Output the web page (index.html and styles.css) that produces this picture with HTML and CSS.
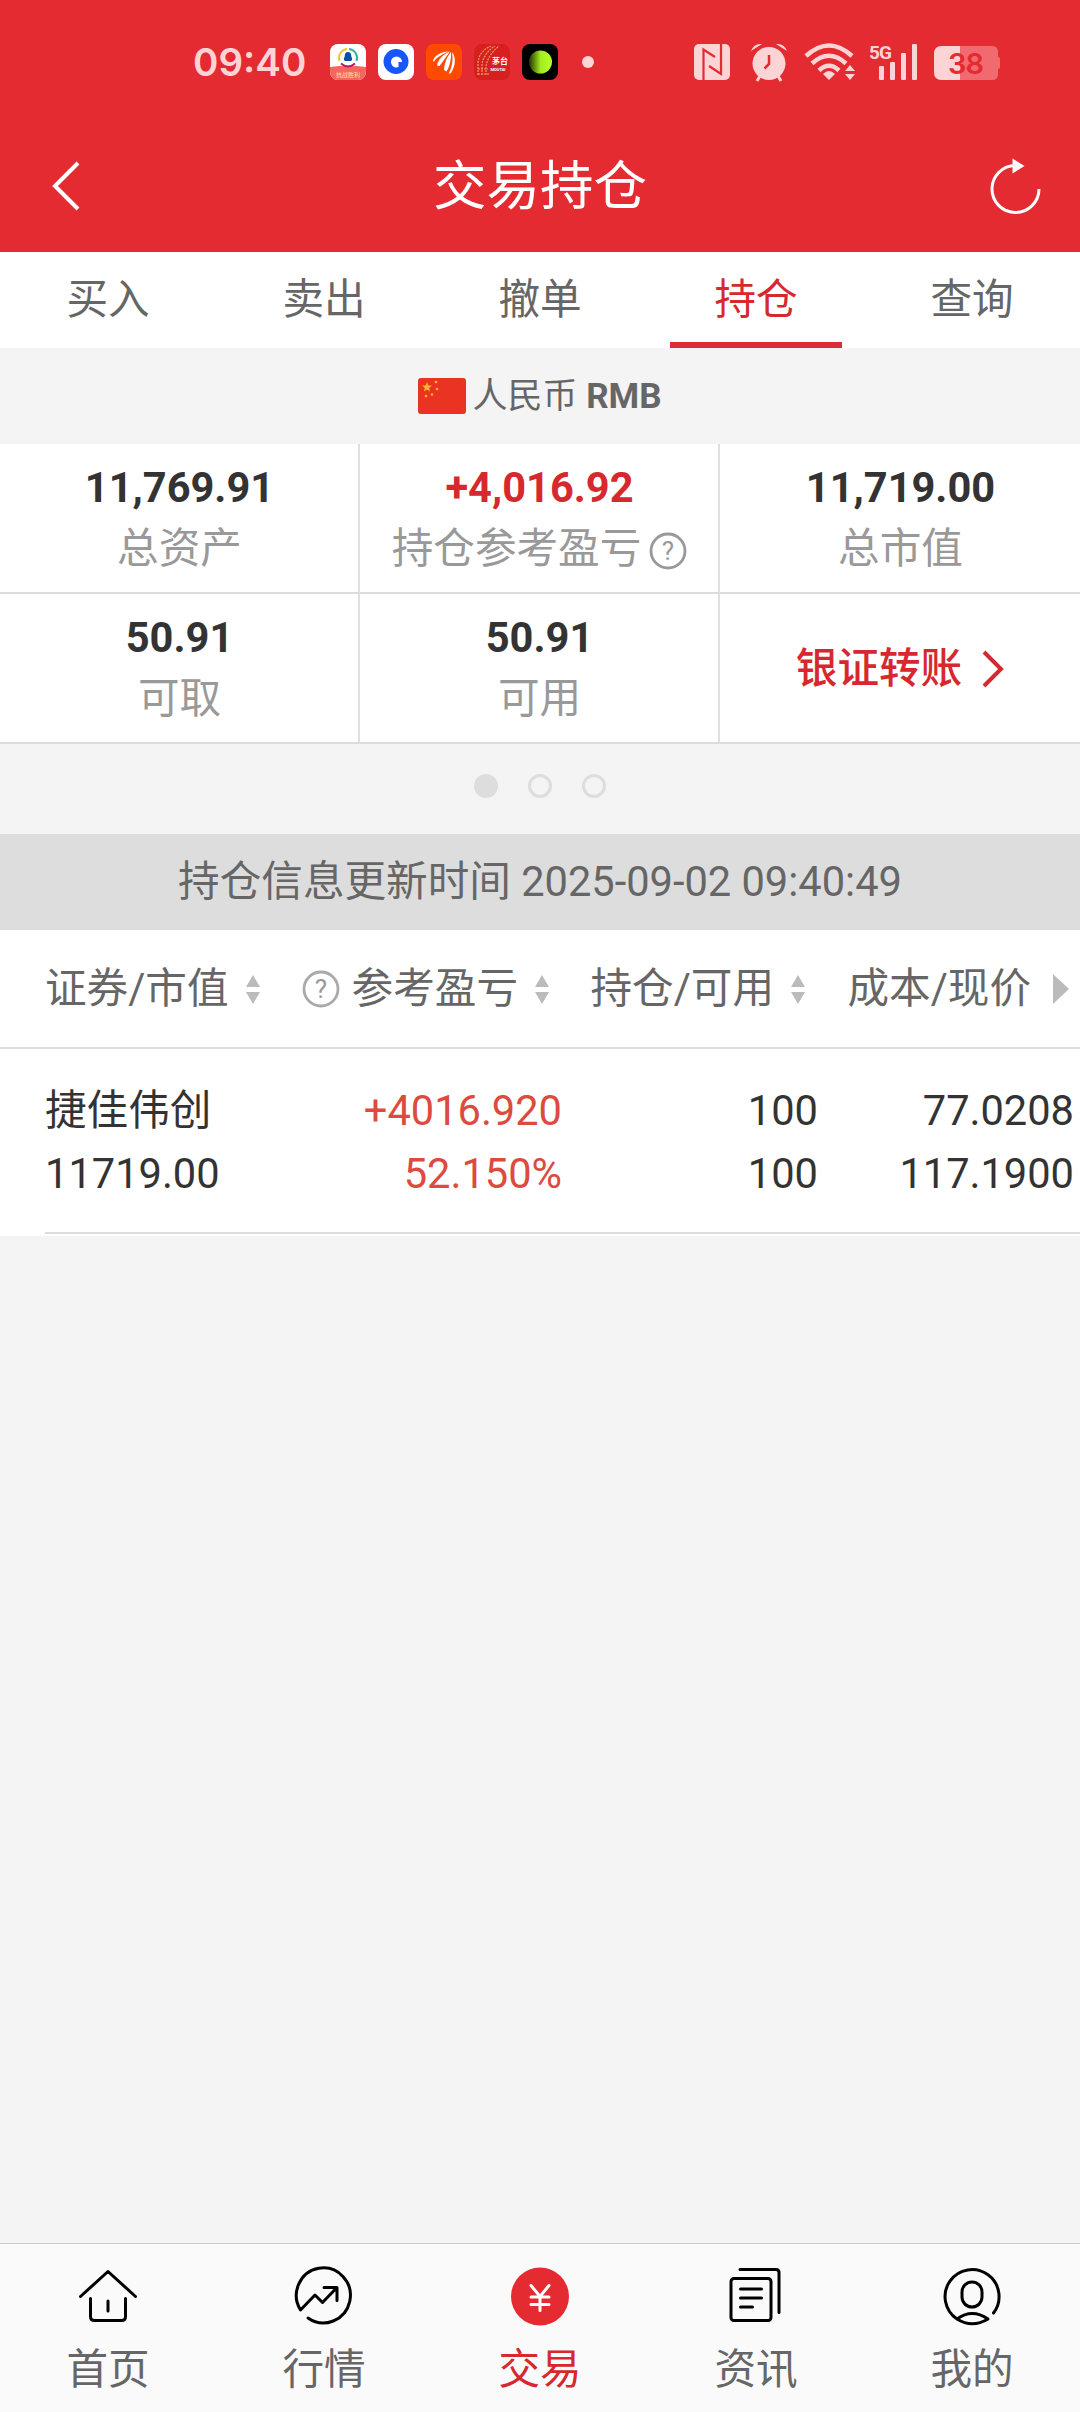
FILE: index.html
```html
<!DOCTYPE html>
<html lang="zh-CN">
<head>
<meta charset="utf-8">
<title>交易持仓</title>
<link rel="stylesheet" href="styles.css">
</head>
<body>
<div class="app">
  <header class="header">
    <div class="status">
      <span class="clock">09:40</span>
      <div class="notices">
        <svg width="36" height="36" viewBox="0 0 36 36"><rect width="36" height="36" rx="8" fill="#fff"/><path d="M0 23q18-3 36 0v5a8 8 0 0 1-8 8H8a8 8 0 0 1-8-8z" fill="#f4675f"/><g fill="none" stroke-width="2"><path d="M9.500 17A9 9 0 0 1 17 5" stroke="#efc33c"/><path d="M19 5a9 9 0 0 1 7.500 12" stroke="#32b39c"/><path d="M11 19.500q7 6 14 0" stroke="#b51e6c"/></g><path d="M18 8c2.500 0 3.300 2 3.300 4.500 1 2 1.200 4-.3 4.500h-6c-1.500-.5-1.300-2.500-.3-4.500 0-2.500.8-4.500 3.300-4.500z" fill="#0b4f9e"/><text x="18" y="33" class="tiny">抗战胜利</text></svg>
        <svg width="36" height="36" viewBox="0 0 36 36"><rect width="36" height="36" rx="8" fill="#fff"/><circle cx="18" cy="17.500" r="12.500" fill="#1557fb"/><path d="M18.500 23.500a5.500 5.500 0 1 1 5.500-5.500h-3.500v5z" fill="#fff"/></svg>
        <svg width="36" height="36" viewBox="0 0 36 36"><rect width="36" height="36" rx="8" fill="#ff4a00"/><path d="M7 17.500C7 12 15 8 23 7.300 17 10 11 13 8 17.500zM11 21.500C12 15 18 10 24 7.500 20.500 12 17.500 17 13.500 22zM18 26C18.500 18 22 11.500 25 8 25.500 14 24 22 20.500 27.500zM22.500 30C27 22 27 14 26 8 30 13 30 21 25 29z" fill="#fff"/></svg>
        <svg width="36" height="36" viewBox="0 0 36 36"><rect width="36" height="36" rx="8" fill="#d6201f"/><g fill="none" stroke="#e8a05c" stroke-width="1.200" stroke-dasharray="2 1"><path d="M4 31V19Q5 7 17 2M8 31V20Q10 9 21 2M12 31V22Q14 11 25 2M4 25h10M4 30h12"/></g><text x="26" y="20" class="tiny tiny-bold">茅台</text><text x="24" y="27" class="tiny tiny-latin">MOUTAI</text></svg>
        <svg width="36" height="36" viewBox="0 0 36 36"><defs><linearGradient id="glow"><stop offset="0" stop-color="#233300"/><stop offset=".5" stop-color="#a2eb20"/><stop offset="1" stop-color="#b8ff2a"/></linearGradient></defs><rect width="36" height="36" rx="8"/><circle cx="18.500" cy="18" r="11.500" fill="url(#glow)"/></svg>
      </div>
      <i class="more"></i>
      <svg class="system" width="310" height="40" viewBox="0 0 310 40" fill="#fdd4d6">
        <rect x="0" y="2" width="36" height="36" rx="5"/><path d="M9.500 38V7.500L21 15M27 2v30L15 24" fill="none" stroke="#e42b31" stroke-width="2.200"/>
        <circle cx="75" cy="21.500" r="16.500"/><path d="M57 9q3-8 11-7zM93 9q-3-8-11-7z"/><path d="m66 34-3 5M84 34l3 5" stroke="#fdd4d6" stroke-width="3"/><path d="M75 13v9l-4.500 4.500" fill="none" stroke="#e42b31" stroke-width="2.500"/>
        <g fill="none" stroke="#fdd4d6" stroke-width="4.500"><path d="M112 14Q135-7 158 14M118 21.500Q135 6 152 21.500M125 28.500Q135 19 145 28.500"/></g><path d="m129 32q6-6 12 0l-6 6z"/><path d="m156 23 5 6h-10zM156 38l5-6h-10z"/>
        <text x="175" y="17" class="network">5G</text><rect x="185" y="24" width="5" height="14" rx="1"/><rect x="196" y="20" width="5" height="18" rx="1"/><rect x="207" y="11" width="5" height="27" rx="1"/><rect x="218" y="2" width="5" height="36" rx="1"/>
        <path d="M248 4h50q6 0 6 6v5q2 0 2 2v8q0 2-2 2v5q0 6-6 6h-50q-8 0-8-8V12q0-8 8-8z" fill="#f16a70"/><path d="M248 4h18v34h-18q-8 0-8-8V12q0-8 8-8z"/><text x="254" y="32" class="battery">38</text>
      </svg>
    </div>
    <div class="titlebar">
      <svg width="60" height="60" viewBox="0 0 60 60" fill="none" stroke="#fff" stroke-width="4"><path d="M40 7 17 30l23 23"/></svg>
      <h1 class="title">交易持仓</h1>
      <svg width="60" height="60" viewBox="0 0 60 60"><path d="M29.500 9.500A23.500 23.500 0 1 0 53 33" fill="none" stroke="#fff" stroke-width="3"/><path d="M26.500 2.500 38.500 10 26.500 17.500z" fill="#fff"/></svg>
    </div>
  </header>
  <nav class="tabs"><a class="tab">买入</a><a class="tab">卖出</a><a class="tab">撤单</a><a class="tab tab-active">持仓</a><a class="tab">查询</a></nav>
  <div class="currency">
    <svg width="48" height="36" viewBox="0 0 48 36"><rect width="48" height="36" rx="3" fill="#ea3323"/><g fill="#f5b52e"><path d="m9 4 1.300 3.400 3.700.2-2.900 2.300 1 3.600L9 11.500l-3.100 2 1-3.600L4 7.600l3.700-.2z"/><circle cx="18" cy="4" r="1.300"/><circle cx="19" cy="11" r="1.300"/><circle cx="14" cy="16.500" r="1.300"/><circle cx="8" cy="18" r="1.300"/></g></svg>
    <span class="currency-name">人民币 <b>RMB</b></span>
  </div>
  <section class="summary">
    <div class="cell"><b class="value">11,769.91</b><span class="label">总资产</span></div>
    <div class="cell"><b class="value value-up">+4,016.92</b><span class="label">持仓参考盈亏<svg class="help" width="38" height="38" viewBox="0 0 38 38"><circle cx="19" cy="19" r="17" fill="none" stroke="#999" stroke-width="2.800"/><text x="19" y="27.500" class="help-mark">?</text></svg></span></div>
    <div class="cell"><b class="value">11,719.00</b><span class="label">总市值</span></div>
    <div class="cell"><b class="value">50.91</b><span class="label">可取</span></div>
    <div class="cell"><b class="value">50.91</b><span class="label">可用</span></div>
    <div class="cell cell-link">银证转账<svg width="22" height="38" viewBox="0 0 22 38" fill="none" stroke="#d7282f" stroke-width="4"><path d="m2 2 17 17L2 36"/></svg></div>
  </section>
  <div class="pager"><i class="dot dot-active"></i><i class="dot"></i><i class="dot"></i></div>
  <div class="updated">持仓信息更新时间 2025-09-02 09:40:49</div>
  <section class="holdings">
    <div class="row row-head">
      <div class="col col-name">证券/市值<svg class="sort" width="16" height="32" viewBox="0 0 16 32"><path d="m8 2 7 12H1zM8 31l7-12H1z"/></svg></div>
      <div class="col"><svg class="help" width="38" height="38" viewBox="0 0 38 38"><circle cx="19" cy="19" r="17" fill="none" stroke="#aaa" stroke-width="2.800"/><text x="19" y="27.500" class="help-mark">?</text></svg><span class="after-help">参考盈亏</span><svg class="sort" width="16" height="32" viewBox="0 0 16 32"><path d="m8 2 7 12H1zM8 31l7-12H1z"/></svg></div>
      <div class="col">持仓/可用<svg class="sort" width="16" height="32" viewBox="0 0 16 32"><path d="m8 2 7 12H1zM8 31l7-12H1z"/></svg></div>
      <div class="col col-last">成本/现价<svg class="next" width="16" height="32" viewBox="0 0 16 32"><path d="m0 1 16 15L0 31z"/></svg></div>
    </div>
    <div class="row row-body">
      <div class="col pair pair-name"><span>捷佳伟创</span><span>11719.00</span></div>
      <div class="col pair pair-up"><span>+4016.920</span><span>52.150%</span></div>
      <div class="col pair"><span>100</span><span>100</span></div>
      <div class="col pair pair-last"><span>77.0208</span><span>117.1900</span></div>
    </div>
  </section>
  <footer class="nav">
    <a class="item"><svg width="60" height="60" viewBox="0 0 60 60" class="line"><path d="M2.500 29.500 30 4.500l27.500 25M12.500 31.500v18q0 4 4 4h27q4 0 4-4v-18M30 34v10"/></svg>首页</a>
    <a class="item"><svg width="60" height="60" viewBox="0 0 60 60" class="line"><path d="M14 51A27 27.500 0 1 0 6.500 43L21 28l7.500 7.500L42 21.500M30 20.500h13v13"/></svg>行情</a>
    <a class="item item-active"><svg width="60" height="60" viewBox="0 0 60 60"><circle cx="30" cy="29.500" r="29" fill="#e42b31"/><path d="m21 18.500 9 11 9-11M30 29.500v14M21 30h18M21 37.500h18" class="yuan"/></svg>交易</a>
    <a class="item"><svg width="60" height="60" viewBox="0 0 60 60" class="line"><rect x="5" y="11.500" width="40" height="42" rx="3"/><path d="M14 2.500h36q3 0 3 3v40M14.500 22h21M14.500 31h21M14.500 40h12"/></svg>资讯</a>
    <a class="item"><svg width="60" height="60" viewBox="0 0 60 60" class="line"><path d="M51.500 46A27 27 0 1 0 15 52Q30 61.500 46 52 30 41 15 52"/><rect x="20" y="15" width="20" height="25" rx="10"/></svg>我的</a>
  </footer>
</div>
</body>
</html>
```
FILE: styles.css
```css
* { box-sizing: border-box; }
body { margin: 0; font: 41.6px/50px Roboto, "Noto Sans CJK SC", sans-serif; color: #666; background: #f4f4f4; }
svg { display: block; flex: none; overflow: visible; }
.app { width: 1080px; height: 2412px; display: flex; flex-direction: column; overflow: hidden; }

.header { height: 252px; background: #e42b31; color: #fff; }
.status { height: 120px; padding: 4px 0 0 193px; display: flex; align-items: center; }
.clock { width: 137px; font: 600 38.5px/48px Inter, sans-serif; color: #fdd4d6; white-space: nowrap; }
.notices { display: flex; gap: 12px; }
.more { width: 12px; height: 12px; margin-left: 24px; border-radius: 50%; background: #fdd4d6; }
.system { margin-left: 100px; }
.tiny { font-size: 6px; fill: #ffe0a0; text-anchor: middle; }
.tiny-bold { font-size: 8px; font-weight: 700; fill: #fff; }
.tiny-latin { font-size: 4px; font-weight: 700; fill: #fff; }
.network { font: 700 19px/19px Roboto, sans-serif; letter-spacing: -1px; }
.battery { font: 600 29px Inter, sans-serif; letter-spacing: -1px; fill: #e42b31; }
.titlebar { height: 132px; padding: 0 34px 0 38px; display: flex; justify-content: space-between; align-items: center; }
.title { margin: 2px 4px 0 0; font-size: 53.5px; line-height: 80px; font-weight: 400; }

.tabs { height: 96px; display: flex; background: #fff; }
.tab { flex: 1; display: flex; justify-content: center; align-items: center; }
.tab-active { margin: 0 22px; flex: 0 0 172px; padding-top: 6px; border-bottom: 6px solid #dc2d35; color: #d7282f; }

.currency { height: 96px; display: flex; justify-content: center; align-items: center; gap: 6px; font-size: 35px; }
.currency-name { padding-top: 2px; }

.summary { height: 300px; display: grid; grid-template-columns: repeat(3, 360px); grid-template-rows: 150px 150px; background: #fff; }
.cell { display: flex; flex-direction: column; align-items: center; padding: 19px 0 0 1px; border-right: 2px solid #e0e0e0; border-bottom: 2px solid #ddd; }
.cell:nth-child(3n) { border-right: 0; }
.value { line-height: 50px; color: #333; }
.value-up, .cell-link { color: #d7282f; }
.label { display: flex; align-items: center; margin-top: 11px; color: #999; }
.label .help { margin: 3px 0 0 8px; }
.help-mark { font: 26px Roboto, sans-serif; fill: #999; text-anchor: middle; }
.cell-link { flex-direction: row; justify-content: center; padding: 2px 0 0; gap: 20px; font-weight: 500; }

.pager { height: 90px; display: flex; justify-content: center; gap: 30px; padding-top: 30px; }
.dot { width: 24px; height: 24px; border: 3px solid #ddd; border-radius: 50%; }
.dot-active { background: #ddd; }
.updated { height: 96px; display: flex; justify-content: center; align-items: center; background: #ddd; }

.holdings { background: #fff; }
.row { display: grid; grid-template-columns: 280px 282px 256px 262px; }
.row-head { height: 119px; border-bottom: 2px solid #ddd; }
.col { display: flex; align-items: center; justify-content: flex-end; white-space: nowrap; }
.col-name { justify-content: flex-start; padding-left: 45px; }
.row-head .col { padding-top: 1px; padding-right: 12px; }
.row-head .col-last { padding-right: 11px; }
.sort { margin-left: 16px; fill: #bbb; }
.next { margin-left: 22px; fill: #bbb; }
.after-help { margin-left: 12px; }
.row-body { height: 187px; }
.pair { flex-direction: column; align-items: flex-end; gap: 13px; padding-top: 37px; justify-content: flex-start; color: #333; height: 185px; border-bottom: 2px solid #ddd; }
.pair-name { align-items: flex-start; margin-left: 45px; }
.pair-up { color: #dc4a40; }
.pair-last { padding-right: 6px; }

.nav { height: 169px; margin-top: auto; display: flex; border-top: 1px solid #ccc; background: #fafafa; }
.item { flex: 1; display: flex; flex-direction: column; align-items: center; gap: 18px; padding-top: 23px; }
.item-active { color: #d7282f; }
.line { fill: none; stroke: #000; stroke-width: 3; stroke-linecap: round; stroke-linejoin: round; }
.yuan { fill: none; stroke: #fff; stroke-width: 3; stroke-linecap: round; }
```
